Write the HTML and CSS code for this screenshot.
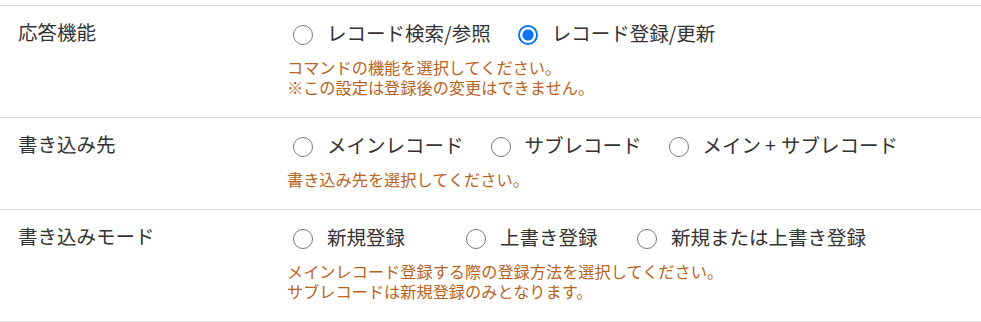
FILE: index.html
```html
<!DOCTYPE html>
<html lang="ja">
<head>
<meta charset="utf-8">
<title>設定</title>
<link rel="stylesheet" href="styles.css">
</head>
<body>
<div class="form">
  <div class="row">
    <div class="label">応答機能</div>
    <div class="field">
      <div class="options">
        <label class="option"><input type="radio" name="func"><span>レコード検索/参照</span></label>
        <label class="option"><input type="radio" name="func" checked><span>レコード登録/更新</span></label>
      </div>
      <p class="help">コマンドの機能を選択してください。<br>※この設定は登録後の変更はできません。</p>
    </div>
  </div>
  <div class="row">
    <div class="label">書き込み先</div>
    <div class="field">
      <div class="options">
        <label class="option"><input type="radio" name="dest"><span>メインレコード</span></label>
        <label class="option"><input type="radio" name="dest"><span>サブレコード</span></label>
        <label class="option"><input type="radio" name="dest"><span>メイン<span class="plus">+</span>サブレコード</span></label>
      </div>
      <p class="help">書き込み先を選択してください。</p>
    </div>
  </div>
  <div class="row">
    <div class="label">書き込みモード</div>
    <div class="field">
      <div class="options options-grid">
        <label class="option"><input type="radio" name="mode"><span>新規登録</span></label>
        <label class="option"><input type="radio" name="mode"><span>上書き登録</span></label>
        <label class="option"><input type="radio" name="mode"><span>新規または上書き登録</span></label>
      </div>
      <p class="help">メインレコード登録する際の登録方法を選択してください。<br>サブレコードは新規登録のみとなります。</p>
    </div>
  </div>
</div>
</body>
</html>
```

FILE: styles.css
```css
html, body {
  margin: 0;
  padding: 0;
  background: #ffffff;
}

body {
  font-family: "Noto Sans CJK JP", "Noto Sans", sans-serif;
  color: #333333;
}

.form {
  padding-top: 5px;
}

.row {
  display: flex;
  border-top: 1px solid #dedede;
  padding: 12px 0 20px;
}

.row:last-child {
  border-bottom: 1px solid #dedede;
}

.label {
  width: 269px;
  padding-left: 18px;
  font-size: 19.5px;
  line-height: 28px;
  flex: none;
}

.field {
  flex: 1;
}

.options {
  display: flex;
  align-items: center;
  height: 30px;
}

.options-grid {
  display: grid;
  grid-template-columns: 173px 171px auto;
}

.option {
  display: inline-flex;
  align-items: center;
  margin-right: 21px;
  font-size: 19.5px;
  line-height: 30px;
  white-space: nowrap;
}

.options-grid .option {
  margin-right: 0;
}

.option input {
  appearance: none;
  -webkit-appearance: none;
  box-sizing: border-box;
  width: 20px;
  height: 20px;
  margin: 3px 14px 0 6px;
  border: 1.6px solid #7a7a7a;
  border-radius: 50%;
  background: #ffffff;
  flex: none;
}

.option input:checked {
  border: 2px solid #0b74f7;
  background: radial-gradient(circle, #0b74f7 0, #0b74f7 5.2px, #ffffff 5.9px);
}

.plus {
  padding: 0 5px 0 4px;
}

.help {
  margin: 9px 0 0;
  font-size: 16.2px;
  line-height: 20px;
  color: #b8641e;
}
```
